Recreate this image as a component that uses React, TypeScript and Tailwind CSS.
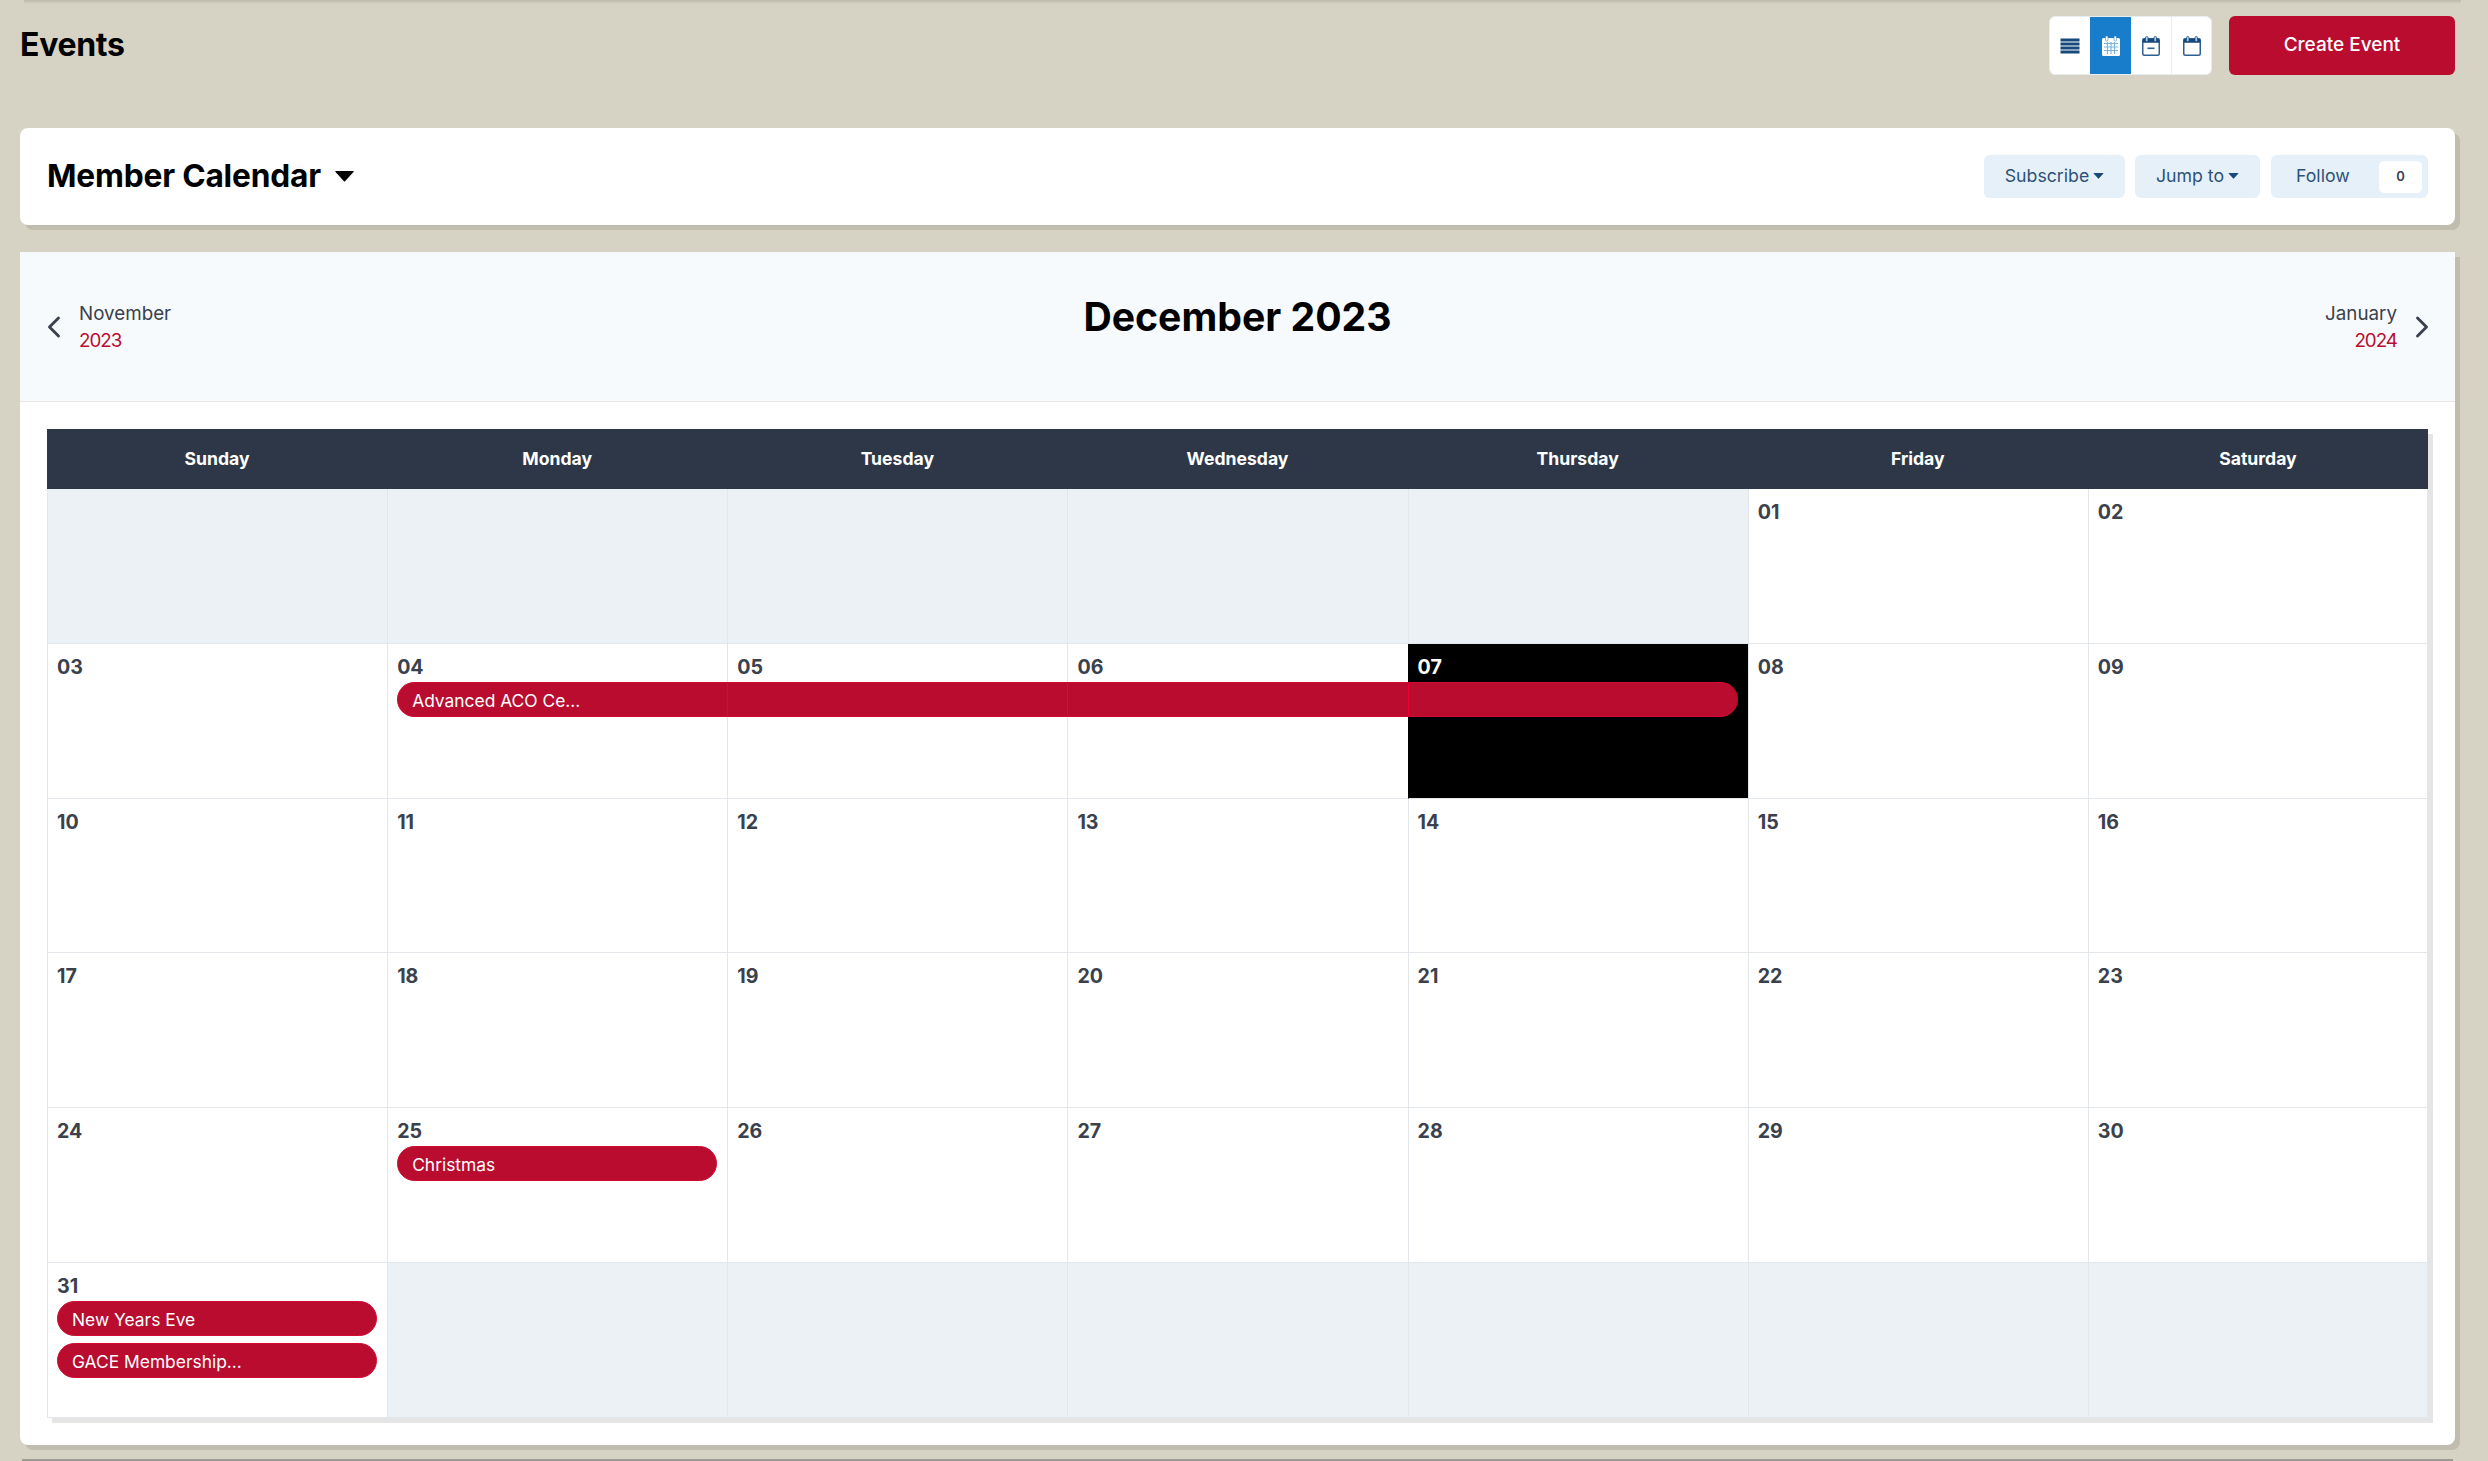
import { ChevronLeft, ChevronRight } from 'lucide-react';

const DAYS = ['Sunday', 'Monday', 'Tuesday', 'Wednesday', 'Thursday', 'Friday', 'Saturday'];

// null = outside the month
const WEEKS: (string | null)[][] = [
  [null, null, null, null, null, '01', '02'],
  ['03', '04', '05', '06', '07', '08', '09'],
  ['10', '11', '12', '13', '14', '15', '16'],
  ['17', '18', '19', '20', '21', '22', '23'],
  ['24', '25', '26', '27', '28', '29', '30'],
  ['31', null, null, null, null, null, null],
];

function Caret({ className }: { className: string }) {
  return (
    <svg viewBox="0 0 10 6" className={className} fill="currentColor">
      <path d="M0.4 0h9.2c.4 0 .5.4.3.6L5.3 5.6a.4.4 0 0 1-.6 0L.1.6C-.1.4 0 0 .4 0z" />
    </svg>
  );
}

function ListIcon() {
  return (
    <svg viewBox="0 0 20 16" className="w-[20px] h-[16px] text-[#17497c]" fill="currentColor">
      <rect x="0.5" y="0.5" width="19" height="3" />
      <rect x="0.5" y="4.5" width="19" height="3" />
      <rect x="0.5" y="8.5" width="19" height="3" />
      <rect x="0.5" y="12.5" width="19" height="3" />
    </svg>
  );
}

function MonthIcon() {
  return (
    <svg viewBox="0 0 18 20" className="w-[18px] h-[20px]">
      <rect x="0" y="2" width="18" height="18" rx="1.5" fill="#fff" />
      <rect x="3.5" y="0" width="2.5" height="5" rx="1" fill="#fff" stroke="#1a7dc9" strokeWidth="0.5" />
      <rect x="12" y="0" width="2.5" height="5" rx="1" fill="#fff" stroke="#1a7dc9" strokeWidth="0.5" />
      <path d="M2 7.5h14M2 11h14M2 14.5h14M5.5 6v12M9 6v12M12.5 6v12" stroke="#7ab6e2" strokeWidth="1.2" />
    </svg>
  );
}

function DayIcon({ dash }: { dash?: boolean }) {
  return (
    <svg viewBox="0 0 18 20" className="w-[18px] h-[20px]" fill="none">
      <rect x="0.75" y="2.75" width="16.5" height="16.5" rx="1.5" stroke="#2f5f8f" strokeWidth="1.5" />
      <rect x="0.75" y="2.75" width="16.5" height="4" fill="#17497c" />
      <rect x="3.5" y="0.5" width="2.5" height="5" rx="1" fill="#a9c9e6" stroke="#17497c" strokeWidth="0.7" />
      <rect x="12" y="0.5" width="2.5" height="5" rx="1" fill="#a9c9e6" stroke="#17497c" strokeWidth="0.7" />
      {dash && <rect x="5.5" y="11.5" width="7" height="1.6" fill="#2f5f8f" />}
    </svg>
  );
}

function Pill({ label, className }: { label?: string; className: string }) {
  return (
    <div className={`h-[35px] bg-[#b90c2f] border-y border-[#d50a33] flex items-center pt-[3px] text-white text-[17.4px] z-10 ${className}`}>
      {label}
    </div>
  );
}

const FULL = 'mx-[10px] rounded-full border-x pl-[14px]';

export default function App() {
  return (
    <div className="h-[1461px] overflow-hidden bg-[#d6d3c4] font-['Inter',sans-serif] text-[#3a414c]">
      {/* site header's shadow, just showing */}
      <div className="ml-[24px] mr-[27px] h-[4px] rounded-b-[3px] bg-gradient-to-b from-[#bdbaac] to-[#d6d3c4] -mb-[1px]" />

      <div className="pl-[20px] pr-[33px] h-[125px] pt-[13px] flex justify-between items-start">
        <h1 className="mt-[7px] text-[32px] leading-[44px] font-bold tracking-[-0.3px] text-black">Events</h1>
        <div className="flex gap-[17px]">
          <div className="flex h-[59px] rounded-[6px] bg-white border border-[#e8edf1] overflow-hidden">
            <button className="w-[40px] flex items-center justify-center"><ListIcon /></button>
            <button className="w-[41px] flex items-center justify-center bg-[#187dcb]"><MonthIcon /></button>
            <button className="w-[41px] flex items-center justify-center border-r border-[#e8edf1]"><DayIcon dash /></button>
            <button className="w-[39px] flex items-center justify-center"><DayIcon /></button>
          </div>
          <button className="w-[226px] h-[59px] pb-[1px] rounded-[6px] bg-[#b90c2f] text-white text-[19px] font-medium">Create Event</button>
        </div>
      </div>

      <div className="ml-[20px] w-[2435px]">
        <div className="h-[97px] rounded-[8px] bg-white shadow-[5px_5px_0_#c1bdae] px-[27px] flex items-center justify-between">
          <div className="flex items-center gap-[14px] text-black">
            <span className="text-[31.7px] pb-[1px] font-bold tracking-[-0.2px]">Member Calendar</span>
            <Caret className="w-[19px] h-[11px] mt-[1px]" />
          </div>
          <div className="flex items-center gap-[10px] text-[#2d5278] text-[17.7px]">
            <button className="w-[141px] h-[43px] pb-[1px] rounded-[6px] bg-[#e6f0f9] flex items-center justify-center gap-[4px]">
              Subscribe <Caret className="w-[11px] h-[6px] text-[#17497c]" />
            </button>
            <button className="w-[125px] h-[43px] pb-[1px] rounded-[6px] bg-[#e6f0f9] flex items-center justify-center gap-[4px]">
              Jump to <Caret className="w-[11px] h-[6px] text-[#17497c]" />
            </button>
            <div className="ml-[1px] w-[157px] h-[43px] pb-[1px] rounded-[6px] bg-[#e6f0f9] flex items-center justify-between pl-[25px] pr-[6px]">
              Follow
              <span className="w-[43px] h-[32px] mt-[1px] rounded-[5px] bg-white flex items-center justify-center text-[13px] font-semibold text-[#3a414c]">0</span>
            </div>
          </div>
        </div>

        <div className="mt-[27px] h-[1193px] rounded-b-[8px] bg-white shadow-[5px_5px_0_#c1bdae]">
          <div className="h-[150px] bg-[#f6fafd] border-b border-[#eee3e6] px-[27px] grid grid-cols-[1fr_auto_1fr] items-center">
            <div className="flex items-center gap-[7px]">
              <ChevronLeft className="w-[36px] h-[36px] -ml-[11px]" strokeWidth={1.9} />
              <div className="text-[18.8px] leading-[27px]">
                <div>November</div>
                <div className="text-[#b90c2f] tracking-[-1px]">2023</div>
              </div>
            </div>
            <h2 className="-mt-[18px] text-[39.2px] font-bold text-black">December 2023</h2>
            <div className="flex items-center justify-end gap-[7px]">
              <div className="text-[18.8px] leading-[27px] text-right">
                <div>January</div>
                <div className="text-[#b90c2f] tracking-[-1px]">2024</div>
              </div>
              <ChevronRight className="w-[36px] h-[36px] -mr-[12px]" strokeWidth={1.9} />
            </div>
          </div>

          <div className="mx-[27px] mt-[27px] shadow-[5px_5px_0_#e5e5e5]">
            <div className="grid grid-cols-7 h-[60px] bg-[#2d3748] text-white">
              {DAYS.map(d => (
                <div key={d} className="flex items-center justify-center text-[17.6px] font-bold">{d}</div>
              ))}
            </div>
            <div className="grid grid-rows-6 h-[928.8px] bg-white">
              {WEEKS.map((week, w) => (
                <div key={w} className="grid grid-cols-7 grid-rows-[38px_35px_7px_35px_1fr]">
                  {week.map((d, i) => (
                    <div
                      key={i}
                      className={`row-start-1 row-span-5 border-b border-l border-[#e3e6ea] pl-[9px] pt-[11px] text-[19.6px] leading-[24px] font-bold ${i === 6 ? 'border-r' : ''} ${d === null ? 'bg-[#ecf1f5] border-[#dde2e7]' : d === '07' ? 'bg-black text-white border-l-black' : ''}`}
                      style={{ gridColumnStart: i + 1 }}
                    >
                      {d}
                    </div>
                  ))}
                  {/* multi-day event is one segment per day, the seams show */}
                  {w === 1 && (
                    <>
                      <Pill label="Advanced ACO Ce..." className="row-start-2 col-start-2 ml-[10px] rounded-l-full border-l pl-[14px]" />
                      <Pill className="row-start-2 col-start-3 border-l border-l-[#ee0033]" />
                      <Pill className="row-start-2 col-start-4 border-l border-l-[#ee0033]" />
                      <Pill className="row-start-2 col-start-5 mr-[10px] rounded-r-full border-l border-l-[#ee0033]" />
                    </>
                  )}
                  {w === 4 && <Pill label="Christmas" className={`row-start-2 col-start-2 ${FULL}`} />}
                  {w === 5 && <Pill label="New Years Eve" className={`row-start-2 col-start-1 ${FULL}`} />}
                  {w === 5 && <Pill label="GACE Membership..." className={`row-start-4 col-start-1 ${FULL}`} />}
                </div>
              ))}
            </div>
          </div>
        </div>
      </div>

      {/* next section's edge at the bottom of the viewport */}
      <div className="ml-[22px] mr-[35px] mt-[14px] h-[2px] bg-[#9a9a94]" />
    </div>
  );
}
